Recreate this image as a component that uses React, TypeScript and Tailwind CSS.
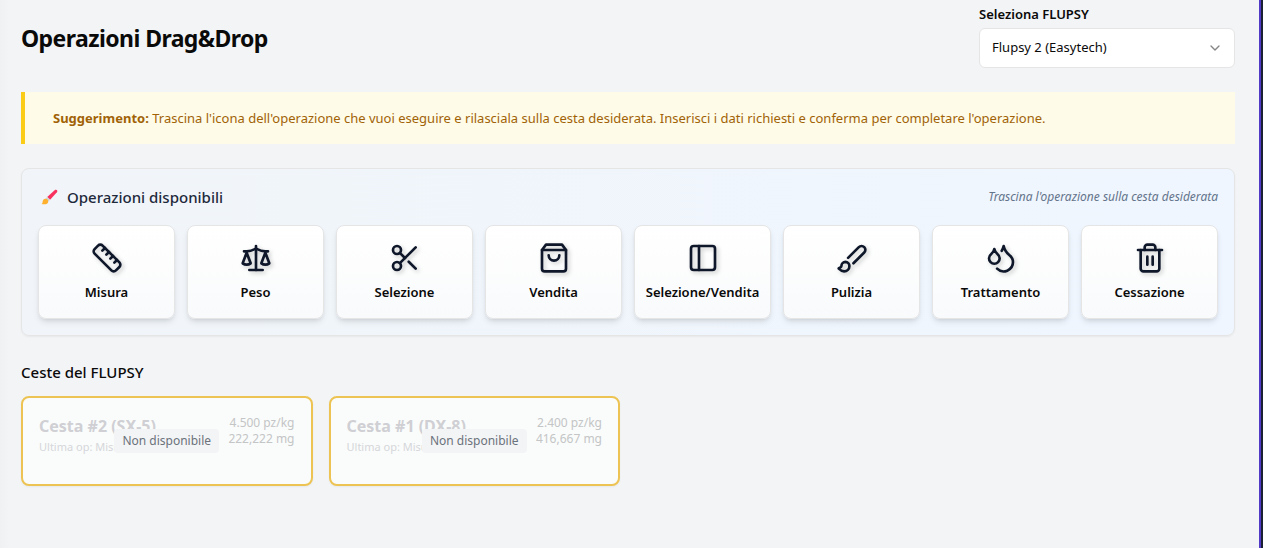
import type { ReactNode } from "react";
import { ChevronDown } from "lucide-react";

type Operation = { label: string; icon: ReactNode };
type Basket = { name: string; lastOp: string; density: string; weight: string };

const operations: Operation[] = [
  {
    label: "Misura",
    icon: (
      <>
        <path d="M21.3 15.3a2.4 2.4 0 0 1 0 3.4l-2.6 2.6a2.4 2.4 0 0 1-3.4 0L2.7 8.7a2.41 2.41 0 0 1 0-3.4l2.6-2.6a2.41 2.41 0 0 1 3.4 0Z" />
        <path d="m14.5 12.5 2-2" />
        <path d="m11.5 9.5 2-2" />
        <path d="m8.5 6.5 2-2" />
        <path d="m17.5 15.5 2-2" />
      </>
    ),
  },
  {
    label: "Peso",
    icon: (
      <>
        <path d="m16 16 3-8 3 8c-.87.65-1.92 1-3 1s-2.13-.35-3-1Z" />
        <path d="m2 16 3-8 3 8c-.87.65-1.92 1-3 1s-2.13-.35-3-1Z" />
        <path d="M7 21h10" />
        <path d="M12 3v18" />
        <path d="M3 7h2c2 0 5-1 7-2 2 1 5 2 7 2h2" />
      </>
    ),
  },
  {
    label: "Selezione",
    icon: (
      <>
        <circle cx="6" cy="6" r="3" />
        <path d="M8.12 8.12 12 12" />
        <path d="M20 4 8.12 15.88" />
        <circle cx="6" cy="18" r="3" />
        <path d="M14.8 14.8 20 20" />
      </>
    ),
  },
  {
    label: "Vendita",
    icon: (
      <>
        <path d="M6 2 3 6v14a2 2 0 0 0 2 2h14a2 2 0 0 0 2-2V6l-3-4Z" />
        <path d="M3 6h18" />
        <path d="M16 10a4 4 0 0 1-8 0" />
      </>
    ),
  },
  {
    label: "Selezione/Vendita",
    icon: (
      <>
        <rect width="18" height="18" x="3" y="3" rx="2" />
        <path d="M9 3v18" />
      </>
    ),
  },
  {
    label: "Pulizia",
    icon: (
      <>
        <path d="m9.06 11.9 8.07-8.06a2.85 2.85 0 1 1 4.03 4.03l-8.06 8.08" />
        <path d="M7.07 14.94c-1.66 0-3 1.35-3 3.02 0 1.33-2.5 1.52-2 2.02 1.08 1.1 2.49 2.02 4 2.02 2.2 0 4-1.8 4-4.04a3.01 3.01 0 0 0-3-3.02z" />
      </>
    ),
  },
  {
    label: "Trattamento",
    icon: (
      <>
        <path d="M7 16.3c2.2 0 4-1.83 4-4.05 0-1.16-.57-2.26-1.71-3.19S7.29 6.75 7 5.3c-.29 1.45-1.14 2.84-2.29 3.76S3 11.1 3 12.25c0 2.22 1.8 4.05 4 4.05z" />
        <path d="M12.56 6.6A10.97 10.97 0 0 0 14 3.02c.5 2.5 2 4.9 4 6.5s3 3.5 3 5.5a6.98 6.98 0 0 1-11.91 4.97" />
      </>
    ),
  },
  {
    label: "Cessazione",
    icon: (
      <>
        <path d="M3 6h18" />
        <path d="M19 6v14c0 1-1 2-2 2H7c-1 0-2-1-2-2V6" />
        <path d="M8 6V4c0-1 1-2 2-2h4c1 0 2 1 2 2v2" />
        <path d="M10 11v6" />
        <path d="M14 11v6" />
      </>
    ),
  },
];

const baskets: Basket[] = [
  { name: "Cesta #2 (SX-5)", lastOp: "Ultima op: Misura", density: "4.500 pz/kg", weight: "222,222 mg" },
  { name: "Cesta #1 (DX-8)", lastOp: "Ultima op: Misura", density: "2.400 pz/kg", weight: "416,667 mg" },
];

function PaintbrushIcon() {
  return (
    <svg viewBox="0 0 18 18" className="size-[18px]" aria-hidden="true">
      <path d="M6.2 9 13.6 2.2c1.8-1.4 3.5.4 2.3 2.1L9.1 11.7Z" fill="#f8315f" />
      <path d="M4.4 10.8 6.2 9l2.9 2.7-1.9 1.9Z" fill="#d3d3d3" />
      <path d="M.5 15.9c1.2-.4.9-1.5 1.3-3 .5-2 2.9-3 4.6-1.5 1.6 1.5.9 3.7-.9 4.5-1.4.6-3.7.5-5 0Z" fill="#ffb02e" />
    </svg>
  );
}

function OperationCard({ label, icon }: Operation) {
  return (
    <button
      type="button"
      draggable
      className="flex cursor-grab flex-col items-center gap-2 rounded-lg border border-[#e5e5e5] bg-linear-to-b from-white to-gray-50 px-1 pt-4 pb-4 shadow-md"
    >
      <svg
        viewBox="0 0 24 24"
        fill="none"
        stroke="currentColor"
        strokeWidth="2"
        strokeLinecap="round"
        strokeLinejoin="round"
        className="size-8 text-[#0f172a] drop-shadow-[2px_2px_2px_rgba(0,0,0,0.2)]"
        aria-hidden="true"
      >
        {icon}
      </svg>
      <span className="text-[13px] leading-5 font-semibold whitespace-nowrap">{label}</span>
    </button>
  );
}

function BasketCard({ name, lastOp, density, weight }: Basket) {
  return (
    <article className="relative min-h-[90px] rounded-lg border-2 border-[#edc453] bg-[#fafcfb] p-4 shadow-xs">
      <div className="flex items-start justify-between">
        <div>
          <h3 className="text-base leading-6 font-bold text-[#cfcfd4]">{name}</h3>
          <p className="text-[11px] leading-[18px] text-[#d5d6da]">{lastOp}</p>
        </div>
        <div className="pt-px text-right text-[12px] leading-4 font-normal text-[#c4c5c6]">
          <p>{density}</p>
          <p>{weight}</p>
        </div>
      </div>
      <div className="absolute inset-0 flex items-center justify-center">
        <span className="rounded-sm bg-gray-100 px-2 py-1 text-[12px] leading-4 font-normal text-[#6b727b]">
          Non disponibile
        </span>
      </div>
    </article>
  );
}

export default function App() {
  return (
    <div className="flex min-h-screen border-r-2 border-[#1c2033] bg-gray-100 font-['Noto_Sans','Open_Sans',sans-serif] text-[#0a0a0a]">
      <main className="min-w-0 flex-1 border-r-2 border-[#4f39c6] bg-linear-to-r from-[#f0f1f3] to-gray-100 to-[10px] pr-6 pl-[21px]">
        <header className="flex items-center justify-between pt-1">
          <h1 className="pt-1 text-[23px] leading-8 font-bold tracking-tight">Operazioni Drag&amp;Drop</h1>
          <div className="w-64">
            <label htmlFor="flupsy" className="mb-1 block text-[13px] leading-5 font-semibold">
              Seleziona FLUPSY
            </label>
            <div className="relative">
              <select
                id="flupsy"
                className="h-10 w-full appearance-none rounded-md border border-[#e5e5e5] bg-white px-3 text-[13px]"
              >
                <option>Flupsy 2 (Easytech)</option>
              </select>
              <ChevronDown className="pointer-events-none absolute top-3 right-3 size-4 text-[#858585]" />
            </div>
          </div>
        </header>

        <p className="mt-6 border-l-4 border-[#facc15] bg-[#fefce8] py-4 pr-4 pl-7 text-[13px] leading-5 text-[#a16207]">
          <strong className="font-bold">Suggerimento:</strong> Trascina l'icona dell'operazione che vuoi eseguire e
          rilasciala sulla cesta desiderata. Inserisci i dati richiesti e conferma per completare l'operazione.
        </p>

        <section className="mt-6 rounded-lg border border-[#e5e5e5] bg-linear-to-r from-[#f1f5f9] to-[#eff6ff] p-4 shadow-xs">
          <div className="mb-4 flex items-center justify-between">
            <div className="flex items-center gap-2 pl-[3px]">
              <PaintbrushIcon />
              <h2 className="text-[15px] leading-6 font-medium text-[#1e293b]">Operazioni disponibili</h2>
            </div>
            <p className="text-[12px] leading-4 text-[#64748b] italic">Trascina l'operazione sulla cesta desiderata</p>
          </div>
          <div className="grid grid-cols-8 gap-3">
            {operations.map((operation) => (
              <OperationCard key={operation.label} {...operation} />
            ))}
          </div>
        </section>

        <section className="mt-6">
          <h2 className="text-[15px] leading-6 font-medium">Ceste del FLUPSY</h2>
          <div className="mt-3 grid grid-cols-4 gap-4">
            {baskets.map((basket) => (
              <BasketCard key={basket.name} {...basket} />
            ))}
          </div>
        </section>
      </main>
    </div>
  );
}
